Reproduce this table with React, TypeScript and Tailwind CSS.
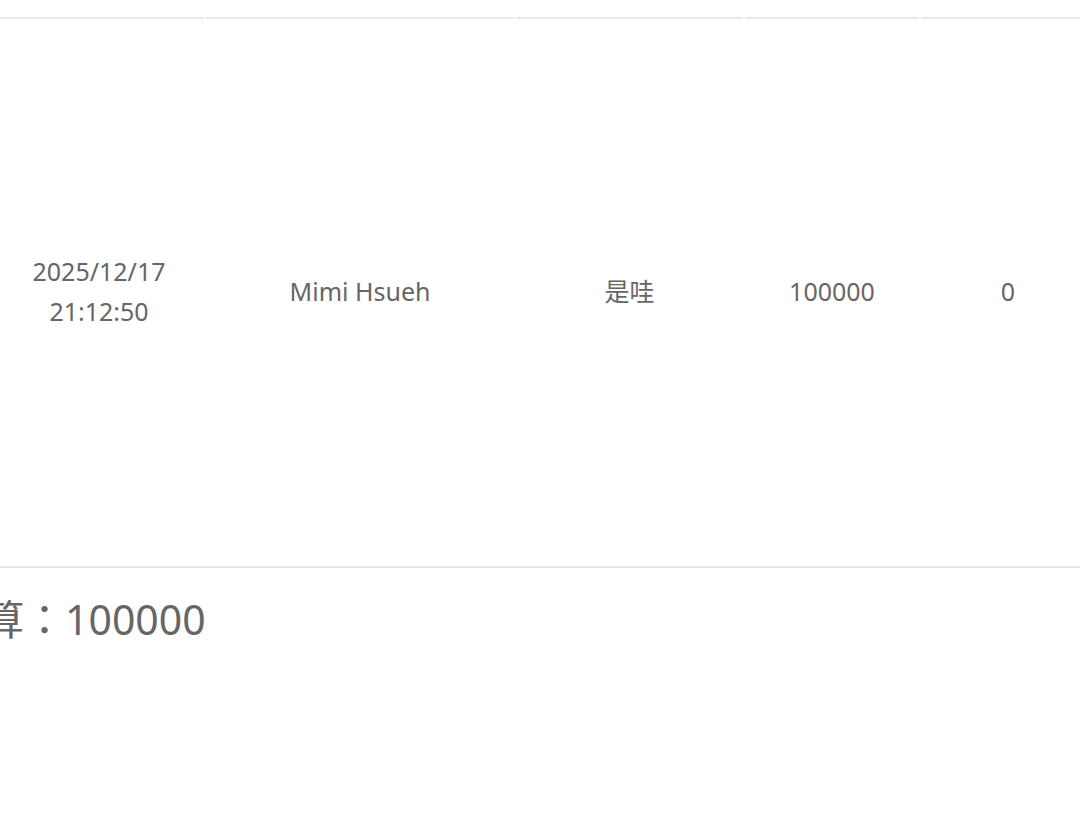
const font = {
  fontFamily: '"Noto Sans", "Noto Sans CJK TC", sans-serif',
};

const columns = [
  { width: "w-[210px]", lines: ["2025/12/17", "21:12:50"] },
  { width: "w-[308px]", lines: ["Mimi Hsueh"] },
  { width: "w-[227px]", lines: ["是哇"] },
  { width: "w-[174px]", lines: ["100000"] },
  { width: "w-[174px]", lines: ["0"] },
];

export default function App() {
  return (
    <div className="min-h-[823px] w-[1080px] overflow-hidden bg-white" style={font}>
      <div className="-ml-[6px] w-[1100px]">
        {/* header (scrolled above the viewport) */}
        <div className="flex h-[19px] gap-[2px]">
          {columns.map((col, i) => (
            <div key={i} className={`${col.width} shrink-0 border-b-2 border-[#e9e9e9]`} />
          ))}
        </div>

        {/* body row */}
        <div className="flex h-[549px] gap-[2px] border-b-2 border-[#e6e6e6]">
          {columns.map((col, i) => (
            <div
              key={i}
              className={`${col.width} flex shrink-0 flex-col items-center justify-center pb-[4px] text-center text-[25px] leading-[40px] text-[#666666]`}
            >
              {col.lines.map((line) => (
                <span key={line}>{line}</span>
              ))}
            </div>
          ))}
        </div>
      </div>

      <div className="-ml-[58px] mt-[23px] whitespace-nowrap text-[41px] leading-[56px] text-[#666666]">
        预算：100000
      </div>
    </div>
  );
}
